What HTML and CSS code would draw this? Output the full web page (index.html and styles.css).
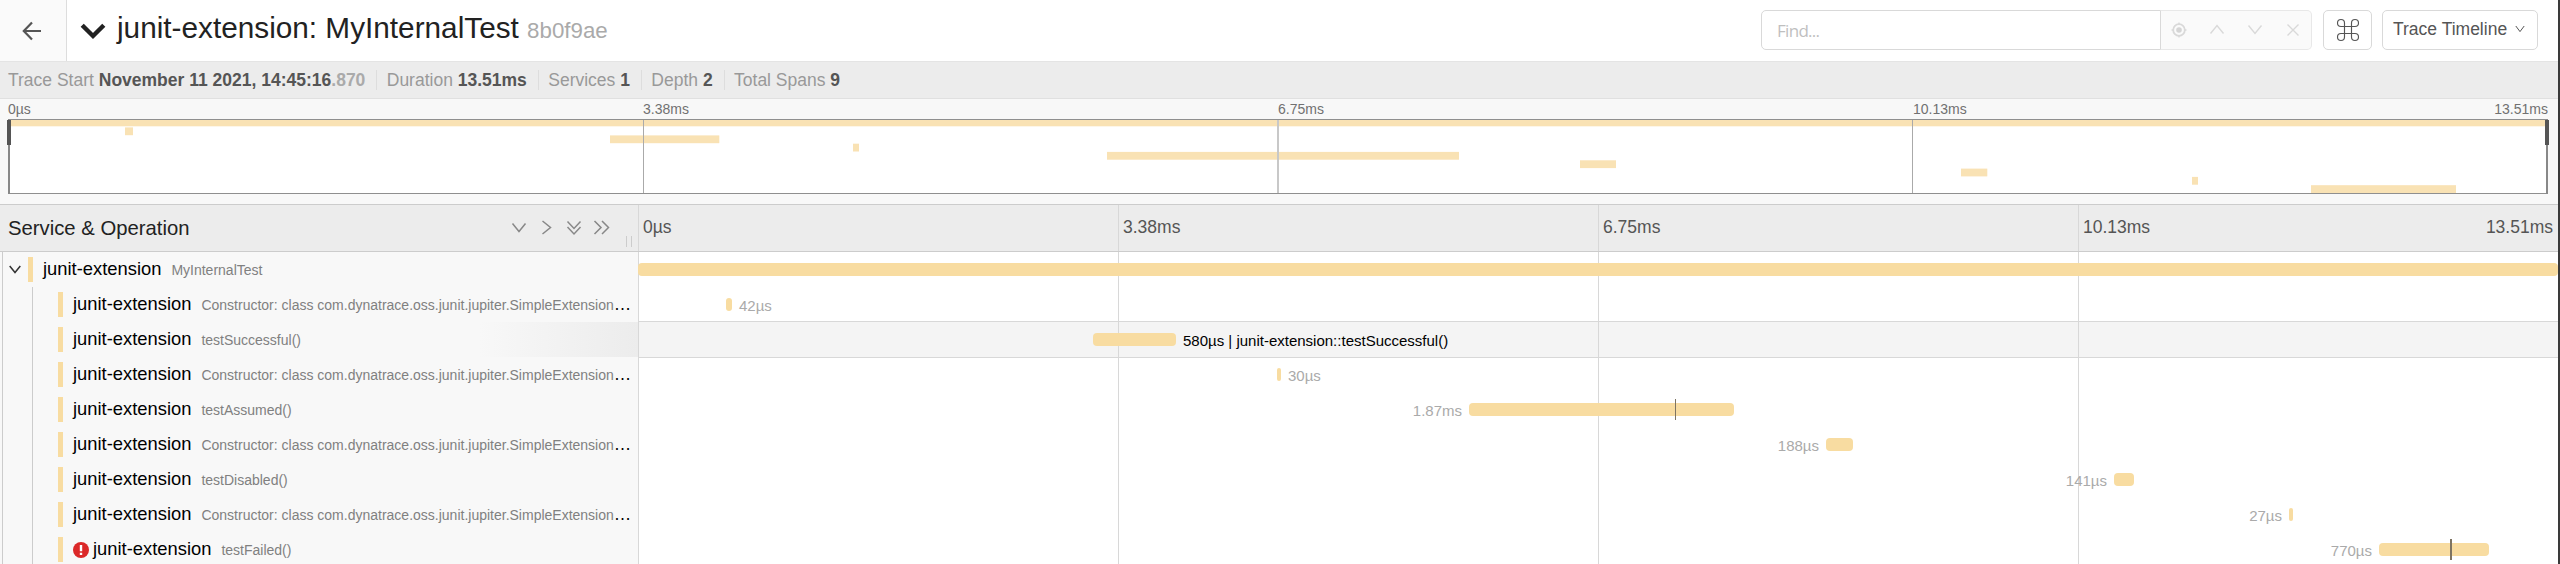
FILE: index.html
```html
<!DOCTYPE html>
<html lang="en">
<head>
<meta charset="utf-8">
<title>junit-extension: MyInternalTest</title>
<link rel="stylesheet" href="styles.css">
</head>
<body>
<div class="page">
  <header class="header">
    <a class="back"><svg width="20" height="20" viewBox="0 0 20 20"><path d="M19 10H2M10 1.5L1.8 10L10 18.5" /></svg></a>
    <svg class="collapse" width="26" height="18" viewBox="0 0 26 18"><path d="M2.2 3.2L13 14L23.8 3.2" /></svg>
    <h1 class="title">junit-extension: MyInternalTest <small>8b0f9ae</small></h1>
    <div class="search">
      <div class="find">Find...</div>
      <div class="find-tools">
        <svg width="16" height="16" viewBox="0 0 16 16"><circle class="ring" cx="8" cy="8" r="5.8"/><circle class="dot" cx="8" cy="8" r="2.8"/><path d="M8 .5v2M8 13.500v2M.5 8h2M13.500 8h2"/></svg>
        <svg width="16" height="16" viewBox="0 0 16 16"><path d="M1.5 11.500L8 3.500L14.5 11.500"/></svg>
        <svg width="16" height="16" viewBox="0 0 16 16"><path d="M1.5 3.500L8 11.500L14.5 3.500"/></svg>
        <svg width="16" height="16" viewBox="0 0 16 16"><path d="M2.5 2.5L13.5 13.5M13.5 2.5L2.5 13.5"/></svg>
      </div>
    </div>
    <div class="btn keys"><svg width="24" height="24" viewBox="0 0 24 24"><path d="M8.500 8.500H5A3.500 3.500 0 1 1 8.500 5V19A3.500 3.500 0 1 1 5 15.500H19A3.500 3.500 0 1 1 15.500 19V5A3.500 3.500 0 1 1 19 8.500Z"/></svg></div>
    <div class="btn view">Trace Timeline<svg width="10" height="8" viewBox="0 0 10 8"><path d="M.8 1L5 6.6L9.2 1"/></svg></div>
  </header>
  <div class="summary">
    <div class="fact">Trace Start <b>November 11 2021, 14:45:16<i>.870</i></b></div>
    <div class="fact">Duration <b>13.51ms</b></div>
    <div class="fact">Services <b>1</b></div>
    <div class="fact">Depth <b>2</b></div>
    <div class="fact">Total Spans <b>9</b></div>
  </div>
  <div class="overview">
    <div class="mini-ticks"><span>0µs</span><span>3.38ms</span><span>6.75ms</span><span>10.13ms</span><span class="last">13.51ms</span></div>
    <svg class="graph" width="2542" height="75" viewBox="7 119 2542 75">
      <rect class="frame" x="9" y="119.5" width="2538" height="74"/>
      <g class="mini">
        <rect x="9" y="119" width="2538" height="7.3"/>
        <rect x="125" y="127.4" width="8" height="7.8"/>
        <rect x="610" y="135.4" width="109.300" height="7.8"/>
        <rect x="853" y="143.700" width="6" height="7.8"/>
        <rect x="1107" y="151.900" width="352" height="7.8"/>
        <rect x="1580" y="160.300" width="36" height="7.8"/>
        <rect x="1961" y="168.600" width="26.300" height="7.8"/>
        <rect x="2192" y="176.900" width="6" height="7.8"/>
        <rect x="2311" y="185.200" width="145" height="7.8"/>
      </g>
      <path class="grid" d="M643.5 120V193M1912.5 120V193"/>
      <path class="grid soft" d="M1278 120V193"/>
      <path class="edge" d="M8 119.500H2548M8 193.500H2548"/>
      <path class="side" d="M9 119V194M2547 119V194"/>
      <path class="handle" d="M9 120V145M2547 120V145"/>
    </svg>
  </div>
  <div class="colhead">
    <div class="left">
      <h3>Service &amp; Operation</h3>
      <svg class="togglers" width="100" height="18" viewBox="510 219 100 18"><path d="M512.500 223.500L519 231.500L525.500 223.500M542.500 221L550.500 227.500L542.500 234M567.500 221.500L574 228.500L580.500 221.500M567.500 227L574 234L580.500 227M594.500 221L601 227.500L594.500 234M602 221L608.500 227.500L602 234"/></svg>
      <span class="grip"></span>
    </div>
    <div class="ticks"><span>0µs</span><span>3.38ms</span><span>6.75ms</span><span>10.13ms<em>13.51ms</em></span></div>
  </div>
  <main class="rows" id="rows"></main>
</div>
<script src="rows.js"></script>
</body>
</html>
```
FILE: rows.js
```js
const ctor = 'Constructor: class com.dynatrace.oss.junit.jupiter.SimpleExtension';
// Offsets and widths are pixels in the 1920px wide timeline.
const spans = [
  { op: 'MyInternalTest', x: 0, w: 1920, root: true },
  { op: ctor, cut: true, x: 88, w: 6, label: '42µs' },
  { op: 'testSuccessful()', x: 455, w: 83, label: '580µs | junit-extension::testSuccessful()', active: true },
  { op: ctor, cut: true, x: 639, w: 4, label: '30µs' },
  { op: 'testAssumed()', x: 831, w: 265, label: '1.87ms', before: true, log: 206, logw: 1 },
  { op: ctor, cut: true, x: 1188, w: 27, label: '188µs', before: true },
  { op: 'testDisabled()', x: 1476, w: 20, label: '141µs', before: true },
  { op: ctor, cut: true, x: 1651, w: 4, label: '27µs', before: true },
  { op: 'testFailed()', x: 1741, w: 110, label: '770µs', before: true, log: 71, logw: 2, error: true }
];
const errorIcon = '<svg class="error" width="16" height="16" viewBox="0 0 16 16"><circle cx="8" cy="8" r="8"/><path d="M8 3v6.200M8 10.700v2.200"/></svg>';
const caret = '<svg class="caret" width="12" height="9" viewBox="0 0 12 9"><path d="M.7 1L6 7.500L11.300 1"/></svg>';
document.getElementById('rows').innerHTML = spans.map(s => {
  const label = s.label ? `<span class="label">${s.label}</span>` : '';
  const log = s.log ? `<i class="log" style="left:${s.log}px;width:${s.logw}px"></i>` : '';
  const bar = `<span class="bar" style="width:${s.w}px">${log}</span>`;
  const place = s.before ? `<div class="lane before" style="width:${s.x + s.w}px">${label}${bar}</div>`
    : `<div class="lane" style="padding-left:${s.x}px">${bar}${label}</div>`;
  return `<div class="row${s.root ? ' root' : ''}${s.active ? ' active' : ''}">
    <div class="name">${s.root ? caret : '<span class="indent"></span>'}<span class="swatch"></span>
      <div class="text">${s.error ? errorIcon : ''}<span class="svc">junit-extension</span><span class="op">${s.op}</span>${s.cut ? '<span class="dots">…</span>' : ''}</div></div>
    <div class="time">${place}</div></div>`;
}).join('');
```
FILE: styles.css
```css
* { box-sizing: border-box; }
body { margin: 0; background: #3a3a3a; font-family: "Liberation Sans", Arial, sans-serif; font-size: 17.5px; color: #000; overflow: hidden; }
h1, h3 { margin: 0; font-weight: 400; }
svg { flex: none; fill: none; }
.page { width: 2558px; height: 564px; overflow: hidden; background: #fff; }

.header { display: flex; height: 62px; border-bottom: 1px solid #e4e4e4; align-items: flex-start; }
.back { width: 67px; height: 61px; background: #fafafa; border-right: 1px solid #ddd; display: flex; align-items: center; justify-content: center; padding-right: 3px; }
.back svg { stroke: #555; stroke-width: 2.2; }
.collapse { margin: 22px 0 0 13px; stroke: #222; stroke-width: 4.4; }
.title { margin-left: 11px; font-size: 29.75px; line-height: 34px; padding-top: 11px; color: #222; flex: 1; white-space: nowrap; }
.title small { font-size: 22.3px; color: #aaa; }
.search { display: flex; height: 40px; margin-top: 10px; }
.find { width: 400px; border: 1px solid #d9d9d9; border-radius: 5px 0 0 5px; padding: 0 15px; font-family: "Open Sans", sans-serif; font-size: 17px; letter-spacing: -.7px; line-height: 39px; color: #bfbfbf; }
.find-tools { width: 152px; margin-left: -1px; border: 1px solid #e8e8e8; border-left-color: #d9d9d9; border-radius: 0 5px 5px 0; background: #fafafa; display: flex; align-items: center; gap: 22px; padding-left: 10px; }
.find-tools svg { stroke: #d9d9d9; stroke-width: 1.4; }
.find-tools .ring { stroke-width: 1.8; }
.find-tools .dot { fill: #d5d5d5; stroke: none; }
.btn { height: 40px; margin-top: 10px; border: 1px solid #d9d9d9; border-radius: 5px; display: flex; align-items: center; }
.keys { width: 49px; margin-left: 11px; justify-content: center; }
.keys svg { stroke: #555; stroke-width: 1.15; }
.view { width: 156px; margin: 10px 20px 0 10px; padding: 0 0 2px 10px; color: #555; white-space: nowrap; }
.view svg { stroke: #555; stroke-width: 1; margin-left: 8px; }

.summary { height: 37px; background: #ececec; border-bottom: 1px solid #e0e0e0; display: flex; align-items: center; padding: 0 0 1px 8px; color: #999; }
.fact { line-height: 20px; white-space: nowrap; padding-right: 11px; margin-right: 9.4px; border-right: 1px solid #ddd; }
.fact:last-child { border: 0; }
.fact b { color: #555; }
.fact i { color: #aaa; font-style: normal; }

.overview { height: 105px; background: #f8f8f8; padding: 1px 0 0 7px; }
.mini-ticks { height: 19px; width: 2541px; padding: 1px 0 0 1px; display: grid; grid-template-columns: repeat(3, 635px) 1fr auto; font-size: 14px; line-height: 17px; color: #717171; }
.graph { display: block; }
.frame { fill: #fff; }
.mini { fill: #f9e2b4; }
.grid { stroke: #aaa; }
.soft { stroke: #c8c8c8; stroke-width: 2; }
.edge { stroke: #8f8f8f; }
.side { stroke: #888; stroke-width: 2; }
.handle { stroke: #555; stroke-width: 4; }

.colhead { height: 48px; background: #ececec; border-top: 1px solid #ccc; border-bottom: 1px solid #ccc; display: flex; }
.left { width: 638px; display: flex; padding-left: 8px; }
.left h3 { width: 502px; font-size: 20.3px; line-height: 46px; color: #222; }
.togglers { margin-top: 14px; stroke: #888; stroke-width: 1.5; }
.grip { width: 6px; height: 11px; margin: 31px 0 0 16px; border: solid #ccc; border-width: 0 1px; }
.ticks { flex: 1; display: grid; grid-template-columns: repeat(4, 480px); line-height: 45px; color: #555; }
.ticks span { border-left: 1px solid #d8d8d8; padding: 0 5px 0 4px; display: flex; justify-content: space-between; }
.ticks em { font-style: normal; }

.row { height: 35px; display: flex; background: linear-gradient(to right, #f8f8f8 638px, transparent 638px); }
.name { width: 638px; height: 35px; display: flex; align-items: center; padding-left: 2px; }
.indent { height: 35px; width: 31px; margin-right: 25px; border: solid #ccc; border-width: 0 1px; }
.root .name { padding-left: 0; background: linear-gradient(#ccc, #ccc) 2px 0 / 1px 35px no-repeat; }
.caret { margin: 0 7px 0 9px; stroke: #333; stroke-width: 1.5; }
.swatch { width: 5px; height: 25px; background: #f8dca1; }
.text { margin-left: 10px; display: flex; align-items: baseline; white-space: nowrap; line-height: 34px; height: 35px; }
.svc { font-size: 18.375px; }
.op { font-size: 14px; color: #808080; margin-left: 10px; }
.error { align-self: center; margin-right: 4px; fill: #db2828; }
.error path { stroke: #fff; stroke-width: 2.4; }
.time { width: 1920px; border-left: 1px solid #d8d8d8; background: linear-gradient(to right, #d8d8d8 1px, transparent 1px) 479px 0 / 480px 100%; }
.lane { height: 35px; margin-left: -1px; display: flex; align-items: center; font-size: 15px; color: #aaa; }
.before { justify-content: flex-end; }
.bar { height: 13px; border-radius: 4px; background: #f8dca1; position: relative; flex: none; }
.label { margin: 2px 7px 0; line-height: 17px; white-space: nowrap; }
.log { position: absolute; top: -4px; height: 21px; background: #7e7462; }
.active .name { background: linear-gradient(to right, transparent 75%, #ececec); }
.active .time { background-color: #f4f4f4; box-shadow: 0 -1px #d8d8d8, 0 1px #d8d8d8; }
.active .label { color: #000; }
```
